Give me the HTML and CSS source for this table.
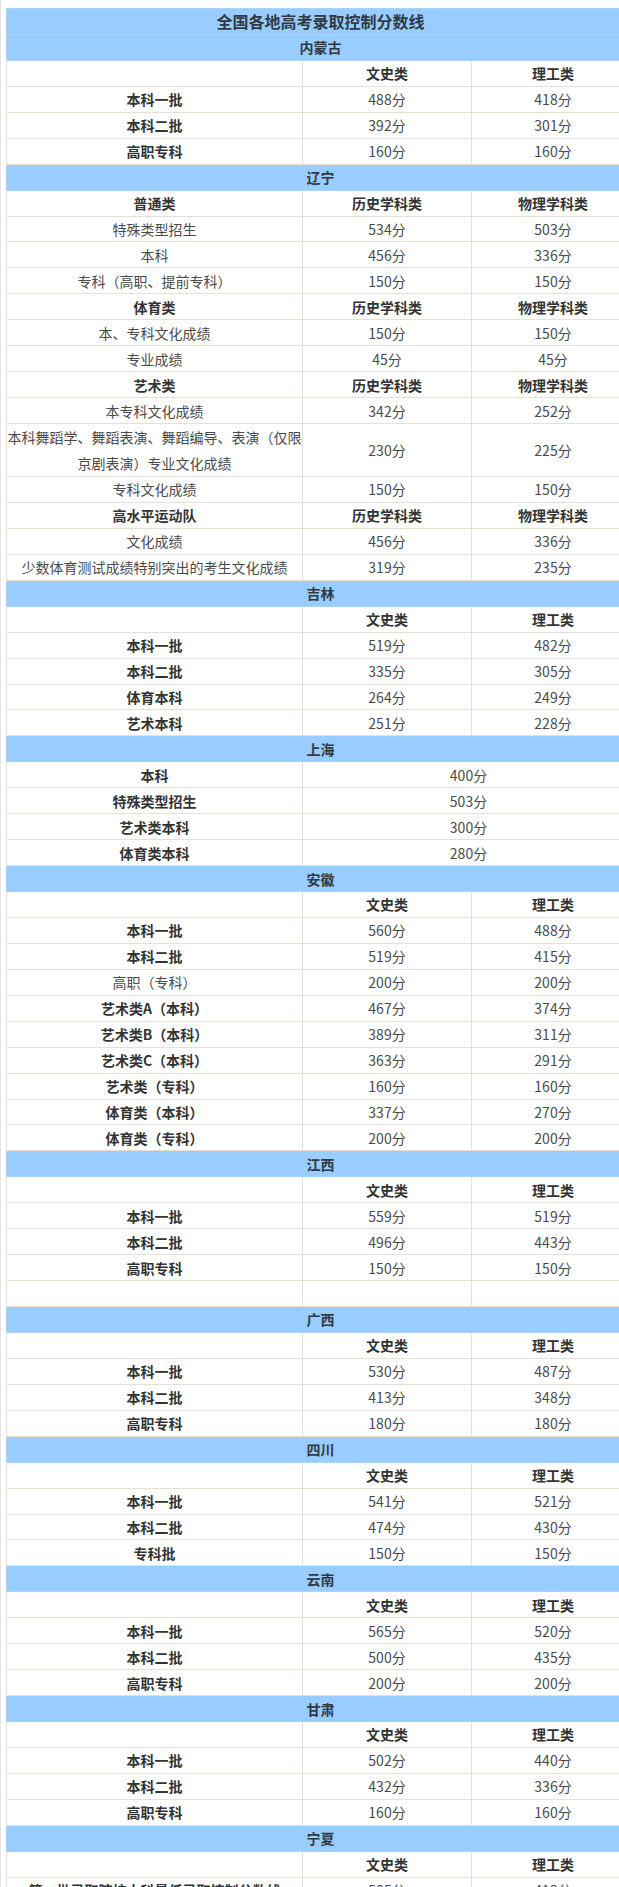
FILE: index.html
```html
<!DOCTYPE html>
<html lang="zh">
<head>
<meta charset="utf-8">
<title>全国各地高考录取控制分数线</title>
<link rel="stylesheet" href="styles.css">
</head>
<body>
<div class="page">
<table class="scores">
<colgroup><col class="c1"><col class="c2"><col class="c3"></colgroup>
<tbody>
<tr class="prov"><td colspan="3" class="title">全国各地高考录取控制分数线</td></tr>
<tr class="prov"><td colspan="3">内蒙古</td></tr>
<tr class="head"><td></td><td>文史类</td><td>理工类</td></tr>
<tr><td class="b">本科一批</td><td>488分</td><td>418分</td></tr>
<tr><td class="b">本科二批</td><td>392分</td><td>301分</td></tr>
<tr><td class="b">高职专科</td><td>160分</td><td>160分</td></tr>

<tr class="prov"><td colspan="3">辽宁</td></tr>
<tr class="head"><td>普通类</td><td>历史学科类</td><td>物理学科类</td></tr>
<tr><td>特殊类型招生</td><td>534分</td><td>503分</td></tr>
<tr><td>本科</td><td>456分</td><td>336分</td></tr>
<tr><td>专科（高职、提前专科）</td><td>150分</td><td>150分</td></tr>
<tr class="head"><td>体育类</td><td>历史学科类</td><td>物理学科类</td></tr>
<tr><td>本、专科文化成绩</td><td>150分</td><td>150分</td></tr>
<tr><td>专业成绩</td><td>45分</td><td>45分</td></tr>
<tr class="head"><td>艺术类</td><td>历史学科类</td><td>物理学科类</td></tr>
<tr><td>本专科文化成绩</td><td>342分</td><td>252分</td></tr>
<tr class="double"><td class="wrap">本科舞蹈学、舞蹈表演、舞蹈编导、表演（仅限京剧表演）专业文化成绩</td><td>230分</td><td>225分</td></tr>
<tr><td>专科文化成绩</td><td>150分</td><td>150分</td></tr>
<tr class="head"><td>高水平运动队</td><td>历史学科类</td><td>物理学科类</td></tr>
<tr><td>文化成绩</td><td>456分</td><td>336分</td></tr>
<tr><td>少数体育测试成绩特别突出的考生文化成绩</td><td>319分</td><td>235分</td></tr>

<tr class="prov"><td colspan="3">吉林</td></tr>
<tr class="head"><td></td><td>文史类</td><td>理工类</td></tr>
<tr><td class="b">本科一批</td><td>519分</td><td>482分</td></tr>
<tr><td class="b">本科二批</td><td>335分</td><td>305分</td></tr>
<tr><td class="b">体育本科</td><td>264分</td><td>249分</td></tr>
<tr><td class="b">艺术本科</td><td>251分</td><td>228分</td></tr>

<tr class="prov"><td colspan="3">上海</td></tr>
<tr><td class="b">本科</td><td colspan="2">400分</td></tr>
<tr><td class="b">特殊类型招生</td><td colspan="2">503分</td></tr>
<tr><td class="b">艺术类本科</td><td colspan="2">300分</td></tr>
<tr><td class="b">体育类本科</td><td colspan="2">280分</td></tr>

<tr class="prov"><td colspan="3">安徽</td></tr>
<tr class="head"><td></td><td>文史类</td><td>理工类</td></tr>
<tr><td class="b">本科一批</td><td>560分</td><td>488分</td></tr>
<tr><td class="b">本科二批</td><td>519分</td><td>415分</td></tr>
<tr><td>高职（专科）</td><td>200分</td><td>200分</td></tr>
<tr><td class="b">艺术类A（本科）</td><td>467分</td><td>374分</td></tr>
<tr><td class="b">艺术类B（本科）</td><td>389分</td><td>311分</td></tr>
<tr><td class="b">艺术类C（本科）</td><td>363分</td><td>291分</td></tr>
<tr><td class="b">艺术类（专科）</td><td>160分</td><td>160分</td></tr>
<tr><td class="b">体育类（本科）</td><td>337分</td><td>270分</td></tr>
<tr><td class="b">体育类（专科）</td><td>200分</td><td>200分</td></tr>

<tr class="prov"><td colspan="3">江西</td></tr>
<tr class="head"><td></td><td>文史类</td><td>理工类</td></tr>
<tr><td class="b">本科一批</td><td>559分</td><td>519分</td></tr>
<tr><td class="b">本科二批</td><td>496分</td><td>443分</td></tr>
<tr><td class="b">高职专科</td><td>150分</td><td>150分</td></tr>
<tr><td></td><td></td><td></td></tr>

<tr class="prov"><td colspan="3">广西</td></tr>
<tr class="head"><td></td><td>文史类</td><td>理工类</td></tr>
<tr><td class="b">本科一批</td><td>530分</td><td>487分</td></tr>
<tr><td class="b">本科二批</td><td>413分</td><td>348分</td></tr>
<tr><td class="b">高职专科</td><td>180分</td><td>180分</td></tr>

<tr class="prov"><td colspan="3">四川</td></tr>
<tr class="head"><td></td><td>文史类</td><td>理工类</td></tr>
<tr><td class="b">本科一批</td><td>541分</td><td>521分</td></tr>
<tr><td class="b">本科二批</td><td>474分</td><td>430分</td></tr>
<tr><td class="b">专科批</td><td>150分</td><td>150分</td></tr>

<tr class="prov"><td colspan="3">云南</td></tr>
<tr class="head"><td></td><td>文史类</td><td>理工类</td></tr>
<tr><td class="b">本科一批</td><td>565分</td><td>520分</td></tr>
<tr><td class="b">本科二批</td><td>500分</td><td>435分</td></tr>
<tr><td class="b">高职专科</td><td>200分</td><td>200分</td></tr>

<tr class="prov"><td colspan="3">甘肃</td></tr>
<tr class="head"><td></td><td>文史类</td><td>理工类</td></tr>
<tr><td class="b">本科一批</td><td>502分</td><td>440分</td></tr>
<tr><td class="b">本科二批</td><td>432分</td><td>336分</td></tr>
<tr><td class="b">高职专科</td><td>160分</td><td>160分</td></tr>

<tr class="prov"><td colspan="3">宁夏</td></tr>
<tr class="head"><td></td><td>文史类</td><td>理工类</td></tr>
<tr><td class="b">第一批录取院校本科最低录取控制分数线</td><td>505分</td><td>413分</td></tr>
<tr><td class="b">第二批录取院校本科最低录取控制分数线</td><td>426分</td><td>345分</td></tr>
</tbody>
</table>
</div>
</body>
</html>
```

FILE: styles.css
```css
html, body {
  margin: 0;
  padding: 0;
  background: #ffffff;
  overflow: hidden;
}

.page {
  width: 619px;
  height: 1887px;
  overflow: hidden;
  box-sizing: border-box;
  padding: 8px 0 0 5px;
  border-left: 1px solid #e2e2e2;
}

.scores {
  width: 628px;
  table-layout: fixed;
  border-collapse: collapse;
  font-family: "Noto Sans CJK SC", "Noto Sans", sans-serif;
  font-size: 14px;
  color: #4a4a4a;
}

.c1 { width: 296px; }
.c2 { width: 169px; }
.c3 { width: 163px; }

.scores td {
  height: 24.94px;
  padding: 0;
  border: 1px solid #e6e1d2;
  text-align: center;
  vertical-align: middle;
  line-height: 18px;
  white-space: nowrap;
  overflow: hidden;
}

.scores tr.double td {
  height: 50.88px;
}

.scores td.wrap {
  white-space: normal;
  line-height: 26px;
}

.scores tr.prov td {
  background: #99ccff;
  font-weight: bold;
  color: #2f3a45;
  border-color: #a9d3fb;
}

.scores td.title {
  font-size: 16px;
}

.scores tr.head td {
  font-weight: bold;
  color: #333333;
}

.scores td.b {
  font-weight: bold;
  color: #333333;
}
```
